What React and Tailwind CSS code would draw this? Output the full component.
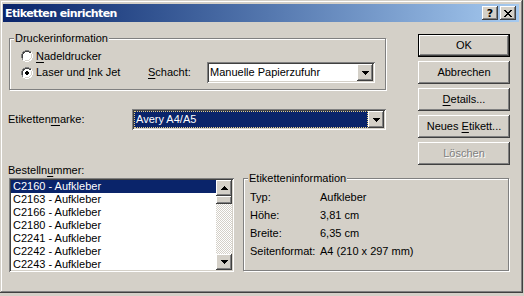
import React from "react";

const raised =
  "shadow-[inset_-1px_-1px_#404040,inset_1px_1px_#ffffff,inset_-2px_-2px_#808080,inset_2px_2px_#d4d0c8]";
const sunken =
  "shadow-[inset_1px_1px_#808080,inset_-1px_-1px_#ffffff,inset_2px_2px_#404040,inset_-2px_-2px_#d4d0c8]";

function U({ children }) {
  return <span className="underline underline-offset-[2px] decoration-[1px]">{children}</span>;
}

function Arrow({ up = false }) {
  return (
    <svg width="7" height="4" viewBox="0 0 7 4" className={up ? "rotate-180" : ""}>
      <path d="M0 0h7L3.5 4z" fill="#000" shapeRendering="crispEdges" />
    </svg>
  );
}

function DropBtn() {
  return (
    <div className={`w-[16px] h-full flex items-center justify-center bg-[#d4d0c8] ${raised}`}>
      <Arrow />
    </div>
  );
}

function Radio({ checked }) {
  return (
    <svg width="12" height="12" viewBox="0 0 12 12" shapeRendering="crispEdges">
      <circle cx="6" cy="6" r="5.5" fill="#ffffff" />
      <path d="M4 0.5h4M2 1.5h2M8 1.5h2M1.5 2v2M0.5 4v4M1.5 8v2" stroke="#808080" />
      <path d="M4 1.5h4M2 2.5h2M8 2.5h2M2.5 2v2M1.5 4v4M2.5 8v0" stroke="#404040" />
      <path d="M10.5 2v2M11.5 4v4M10.5 8v2M2 10.5h2M8 10.5h2M4 11.5h4" stroke="#ffffff" />
      <path d="M9.5 8v1M10.5 4v4M4 10.5h4M8 9.5h1" stroke="#d4d0c8" />
      {checked && <path d="M5 4h2v1h1v2h-1v1h-2v-1h-1v-2h1z" fill="#000" />}
    </svg>
  );
}

function Button({ children, isDefault, disabled }) {
  const base = `w-[92px] h-[23px] flex items-center justify-center bg-[#d4d0c8]`;
  if (isDefault) {
    return (
      <div className="w-[92px] h-[23px] border border-black">
        <div className={`w-full h-full flex items-center justify-center ${raised}`}>{children}</div>
      </div>
    );
  }
  return (
    <div
      className={`${base} ${raised} ${
        disabled ? "text-[#808080] [text-shadow:1px_1px_0_#ffffff]" : ""
      }`}
    >
      {children}
    </div>
  );
}

const items = [
  "C2160 - Aufkleber",
  "C2163 - Aufkleber",
  "C2166 - Aufkleber",
  "C2180 - Aufkleber",
  "C2241 - Aufkleber",
  "C2242 - Aufkleber",
  "C2243 - Aufkleber",
];

const info = [
  ["Typ:", "Aufkleber"],
  ["Höhe:", "3,81 cm"],
  ["Breite:", "6,35 cm"],
  ["Seitenformat:", "A4 (210 x 297 mm)"],
];

export default function App() {
  return (
    <div className="w-[524px] h-[296px] bg-[#d4d0c8] font-['Liberation_Sans',Arial,sans-serif] text-[11px] leading-[13px] text-black">
      <div
        className={`w-[523px] h-[293px] bg-[#d4d0c8] flex flex-col pl-[3px] pr-[4px] pt-[4px] shadow-[inset_-1px_-1px_#404040,inset_1px_1px_#d4d0c8,inset_-2px_-2px_#808080,inset_2px_2px_#ffffff]`}
      >
        {/* Title bar */}
        <div className="h-[18px] flex items-center justify-between pl-[2px] pr-[3px] bg-gradient-to-r from-[#0a246a] to-[#a6caf0]">
          <span className="text-white font-bold text-[11px] font-['DejaVu_Sans',sans-serif] tracking-[-0.6px]">
            Etiketten einrichten
          </span>
          <div className="flex gap-[2px]">
            <div className={`w-[16px] h-[14px] flex items-center justify-center bg-[#d4d0c8] ${raised}`}>
              <span className="font-bold text-[11px] leading-[11px] font-['DejaVu_Sans',sans-serif]">?</span>
            </div>
            <div className={`w-[16px] h-[14px] flex items-center justify-center bg-[#d4d0c8] ${raised}`}>
              <svg width="8" height="7" viewBox="0 0 8 7" shapeRendering="crispEdges">
                <path d="M0 0h2v1h-2zM6 0h2v1h-2zM1 1h2v1h-2zM5 1h2v1h-2zM2 2h4v1h-4zM3 3h2v1h-2zM2 4h4v1h-4zM1 5h2v1h-2zM5 5h2v1h-2zM0 6h2v1h-2zM6 6h2v1h-2z" fill="#000" />
              </svg>
            </div>
          </div>
        </div>

        {/* Client area */}
        <div className="flex flex-col">
          {/* Top section */}
          <div className="flex">
            <div className="ml-[6px] flex flex-col">
              {/* Druckerinformation group */}
              <div className="relative mt-[16px] w-[377px] h-[52px] border border-[#808080] shadow-[inset_1px_1px_#ffffff,1px_1px_#ffffff]">
                <span className="absolute left-[4px] -top-[7px] px-[1px] bg-[#d4d0c8]">Druckerinformation</span>
                <div className="pt-[10px] pl-[11px] flex flex-col">
                  <div className="h-[14px] flex items-center">
                    <Radio checked={false} />
                    <span className="ml-[3px]">
                      <U>N</U>adeldrucker
                    </span>
                  </div>
                  <div className="h-[21px] mt-[-1px] flex items-center">
                    <Radio checked />
                    <span className="ml-[3px] w-[112px]">
                      Laser und <U>I</U>nk Jet
                    </span>
                    <span className="w-[59px]">
                      <U>S</U>chacht:
                    </span>
                    <div className={`w-[168px] h-[21px] bg-white flex p-[2px] ${sunken}`}>
                      <div className="flex-1 flex items-center pl-[1px]">Manuelle Papierzufuhr</div>
                      <DropBtn />
                    </div>
                  </div>
                </div>
              </div>

              {/* Etikettenmarke */}
              <div className="mt-[19px] h-[21px] flex items-center">
                <span className="w-[123px] -ml-[1px]">
                  Etiketten<U>m</U>arke:
                </span>
                <div className={`w-[254px] h-[21px] bg-white flex p-[2px] ml-[1px] ${sunken}`}>
                  <div className="flex-1 flex items-center bg-[#0a246a] text-white border border-dotted border-[#e6cf86] pl-[1px]">
                    Avery A4/A5
                  </div>
                  <DropBtn />
                </div>
              </div>
            </div>

            {/* Buttons */}
            <div className="ml-[32px] mt-[12px] flex flex-col gap-[4px]">
              <Button isDefault>OK</Button>
              <Button>Abbrechen</Button>
              <Button>
                <span>
                  <U>D</U>etails...
                </span>
              </Button>
              <Button>
                <span>
                  Neues <U>E</U>tikett...
                </span>
              </Button>
              <Button disabled>Löschen</Button>
            </div>
          </div>

          {/* Bottom section */}
          <div className="flex items-start mt-[-1px]">
            <div className="ml-[6px] flex flex-col">
              <span className="-ml-[1px]">
                Bestelln<U>u</U>mmer:
              </span>
              <div className={`mt-[1px] w-[225px] h-[94px] bg-white p-[2px] flex ${sunken}`}>
                <div className="flex-1 flex flex-col overflow-hidden">
                  {items.map((it, i) => (
                    <div
                      key={it}
                      className={`h-[13px] shrink-0 flex items-center pl-[2px] ${
                        i === 0 ? "bg-[#0a246a] text-white" : ""
                      }`}
                    >
                      {it}
                    </div>
                  ))}
                </div>
                <div className="w-[16px] flex flex-col">
                  <div className={`h-[16px] flex items-center justify-center bg-[#d4d0c8] ${raised}`}>
                    <Arrow up />
                  </div>
                  <div className={`h-[8px] bg-[#d4d0c8] ${raised}`} />
                  <div className="flex-1 bg-[repeating-conic-gradient(#ffffff_0_25%,#d4d0c8_0_50%)] bg-[length:2px_2px]" />
                  <div className={`h-[16px] flex items-center justify-center bg-[#d4d0c8] ${raised}`}>
                    <Arrow />
                  </div>
                </div>
              </div>
            </div>

            {/* Etiketteninformation group */}
            <div className="relative ml-[9px] mt-[14px] w-[266px] h-[93px] border border-[#808080] shadow-[inset_1px_1px_#ffffff,1px_1px_#ffffff]">
              <span className="absolute left-[4px] -top-[7px] px-[1px] bg-[#d4d0c8]">Etiketteninformation</span>
              <div className="pt-[12px] pl-[6px] flex flex-col gap-[5px]">
                {info.map(([k, v]) => (
                  <div key={k} className="flex h-[13px] items-center">
                    <span className="w-[70px]">{k}</span>
                    <span>{v}</span>
                  </div>
                ))}
              </div>
            </div>
          </div>
        </div>
      </div>
    </div>
  );
}
